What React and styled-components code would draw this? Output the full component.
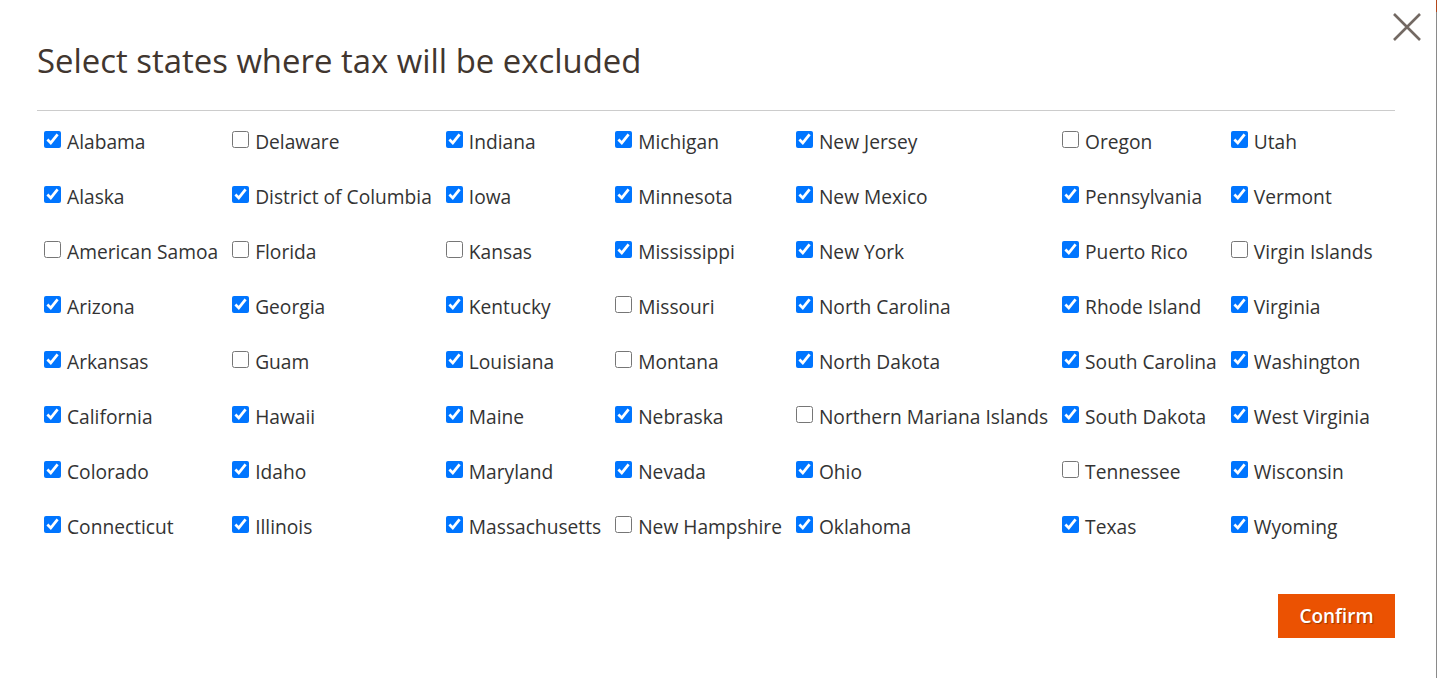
import React, { useState } from "react";
import styled, { createGlobalStyle } from "styled-components";

const GlobalStyle = createGlobalStyle`
  html, body {
    margin: 0;
    padding: 0;
    background: #ffffff;
  }
  body {
    font-family: "Open Sans", "Noto Sans", sans-serif;
  }
`;

const STATES = [
  ["Alabama", true], ["Alaska", true], ["American Samoa", false], ["Arizona", true],
  ["Arkansas", true], ["California", true], ["Colorado", true], ["Connecticut", true],
  ["Delaware", false], ["District of Columbia", true], ["Florida", false], ["Georgia", true],
  ["Guam", false], ["Hawaii", true], ["Idaho", true], ["Illinois", true],
  ["Indiana", true], ["Iowa", true], ["Kansas", false], ["Kentucky", true],
  ["Louisiana", true], ["Maine", true], ["Maryland", true], ["Massachusetts", true],
  ["Michigan", true], ["Minnesota", true], ["Mississippi", true], ["Missouri", false],
  ["Montana", false], ["Nebraska", true], ["Nevada", true], ["New Hampshire", false],
  ["New Jersey", true], ["New Mexico", true], ["New York", true], ["North Carolina", true],
  ["North Dakota", true], ["Northern Mariana Islands", false], ["Ohio", true], ["Oklahoma", true],
  ["Oregon", false], ["Pennsylvania", true], ["Puerto Rico", true], ["Rhode Island", true],
  ["South Carolina", true], ["South Dakota", true], ["Tennessee", false], ["Texas", true],
  ["Utah", true], ["Vermont", true], ["Virgin Islands", false], ["Virginia", true],
  ["Washington", true], ["West Virginia", true], ["Wisconsin", true], ["Wyoming", true],
];

const Page = styled.div`
  display: flex;
  height: 678px;
  overflow: hidden;
`;

const Modal = styled.div`
  position: relative;
  flex: 1;
  padding: 0 41px 0 37px;
  background: #ffffff;
`;

const Edge = styled.div`
  width: 1px;
  background: linear-gradient(to bottom, #b4461a 0, #b4461a 12px, #8a8a8a 12px);
`;

const CloseButton = styled.button`
  position: absolute;
  top: 10px;
  right: 12px;
  width: 34px;
  height: 34px;
  padding: 0;
  border: 0;
  background: transparent;
  cursor: pointer;
  display: flex;
  align-items: center;
  justify-content: center;
`;

const Header = styled.header`
  padding-top: 38px;
  padding-bottom: 27px;
  border-bottom: 1px solid #cccccc;
`;

const Title = styled.h1`
  margin: 0;
  font-weight: 400;
  font-size: 32.9px;
  line-height: 45px;
  color: #41362f;
`;

const Grid = styled.div`
  display: grid;
  grid-auto-flow: column;
  grid-template-rows: repeat(8, 55px);
  grid-auto-columns: auto;
  justify-content: start;
  column-gap: 14px;
  padding: 3px 0 0 7px;
`;

const Option = styled.label`
  display: flex;
  align-items: center;
  gap: 6px;
  font-size: 19.2px;
  color: #333333;
  white-space: nowrap;
  cursor: pointer;
`;

const Box = styled.input`
  margin: 0;
  width: 17px;
  height: 17px;
  accent-color: #0075ff;
  position: relative;
  top: -2px;
`;

const Footer = styled.footer`
  display: flex;
  justify-content: flex-end;
  padding-top: 40px;
`;

const ConfirmButton = styled.button`
  width: 117px;
  height: 44px;
  border: 0;
  background: #eb5202;
  color: #ffffff;
  font-family: "Open Sans", "Noto Sans", sans-serif;
  font-weight: 600;
  font-size: 19px;
  text-shadow: 1px 1px 1px rgba(0, 0, 0, 0.35);
  cursor: pointer;
`;

function CloseIcon() {
  return (
    <svg width="30" height="30" viewBox="0 0 30 30">
      <path d="M2 2 L28 28 M28 2 L2 28" stroke="#736963" strokeWidth="2.6" fill="none" />
    </svg>
  );
}

export default function App() {
  const [checked, setChecked] = useState(() =>
    Object.fromEntries(STATES.map(([name, on]) => [name, on]))
  );

  const toggle = (name) =>
    setChecked((prev) => ({ ...prev, [name]: !prev[name] }));

  return (
    <Page>
      <GlobalStyle />
      <Modal>
        <CloseButton aria-label="Close">
          <CloseIcon />
        </CloseButton>
        <Header>
          <Title>Select states where tax will be excluded</Title>
        </Header>
        <Grid>
          {STATES.map(([name]) => (
            <Option key={name}>
              <Box
                type="checkbox"
                checked={checked[name]}
                onChange={() => toggle(name)}
              />
              {name}
            </Option>
          ))}
        </Grid>
        <Footer>
          <ConfirmButton>Confirm</ConfirmButton>
        </Footer>
      </Modal>
      <Edge />
    </Page>
  );
}
